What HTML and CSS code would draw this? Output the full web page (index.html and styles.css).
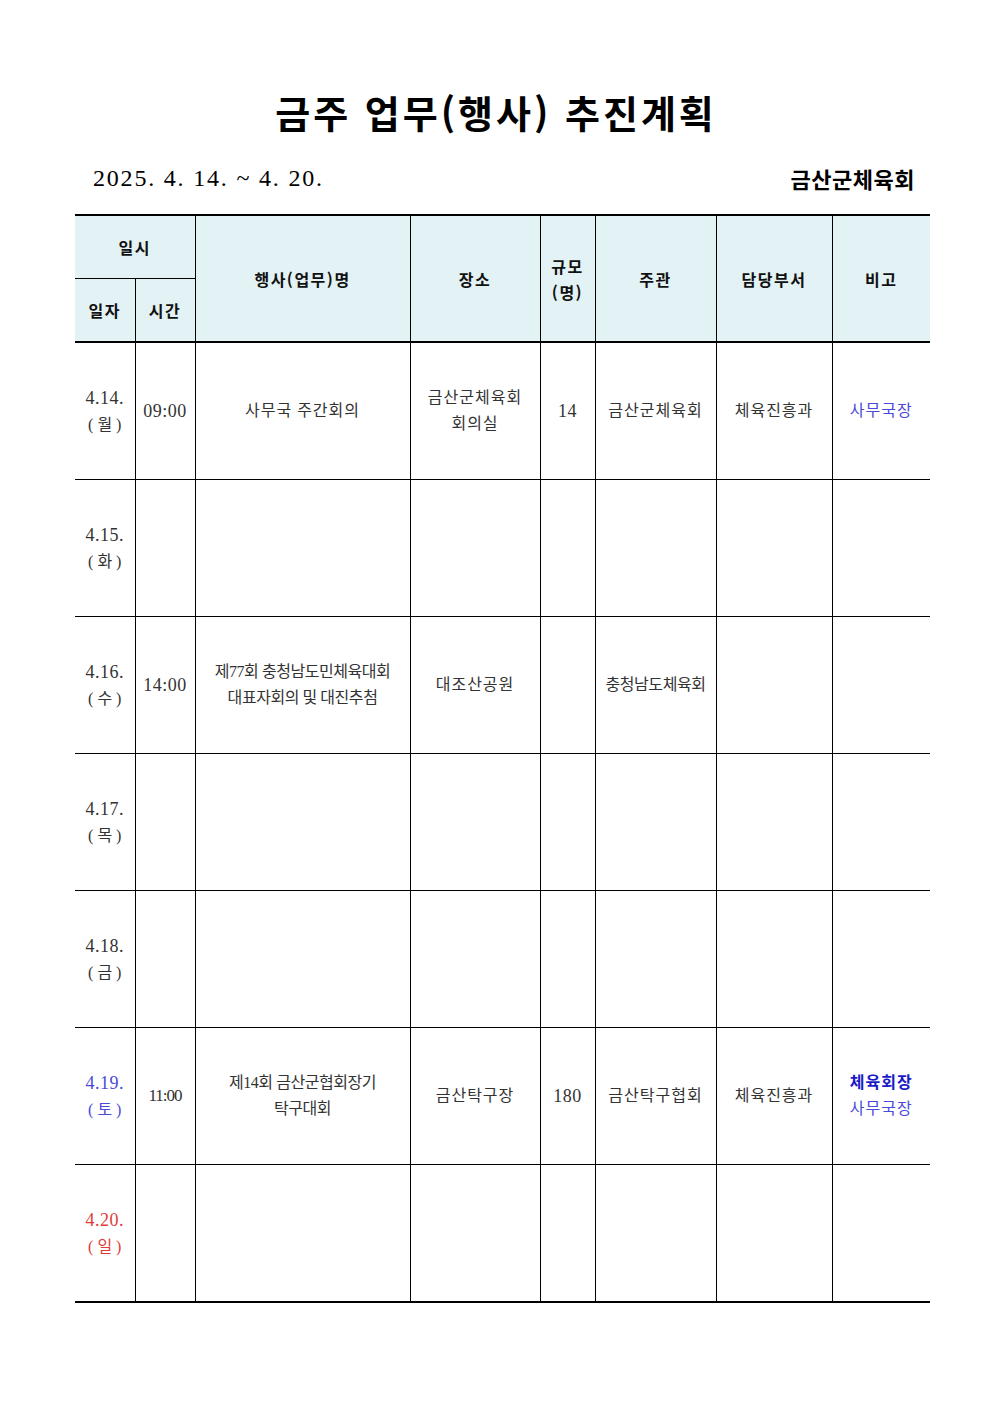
FILE: index.html
```html
<!DOCTYPE html>
<html lang="ko">
<head>
<meta charset="utf-8">
<link rel="stylesheet" href="styles.css">
</head>
<body>
<div class="page">
  <h1 class="title">금주 업무(행사) 추진계획</h1>
  <div class="subline">
    <span class="period">2025. 4. 14. ~ 4. 20.</span>
    <span class="org">금산군체육회</span>
  </div>
  <table class="plan">
    <colgroup>
      <col class="c1"><col class="c2"><col class="c3"><col class="c4"><col class="c5"><col class="c6"><col class="c7"><col class="c8">
    </colgroup>
    <thead>
      <tr class="h1">
        <th colspan="2">일시</th>
        <th rowspan="2">행사(업무)명</th>
        <th rowspan="2">장소</th>
        <th rowspan="2">규모<br>(명)</th>
        <th rowspan="2">주관</th>
        <th rowspan="2">담당부서</th>
        <th rowspan="2" class="last">비고</th>
      </tr>
      <tr class="h2">
        <th>일자</th>
        <th>시간</th>
      </tr>
    </thead>
    <tbody>
      <tr>
        <td class="date"><span class="num">4.14.</span><br>( 월 )</td>
        <td class="num">09:00</td>
        <td>사무국 주간회의</td>
        <td>금산군체육회<br>회의실</td>
        <td class="num">14</td>
        <td>금산군체육회</td>
        <td>체육진흥과</td>
        <td class="last blue">사무국장</td>
      </tr>
      <tr>
        <td class="date"><span class="num">4.15.</span><br>( 화 )</td>
        <td></td><td></td><td></td><td></td><td></td><td></td><td class="last"></td>
      </tr>
      <tr>
        <td class="date"><span class="num">4.16.</span><br>( 수 )</td>
        <td class="num">14:00</td>
        <td class="tight">제77회 충청남도민체육대회<br>대표자회의 및 대진추첨</td>
        <td>대조산공원</td>
        <td></td>
        <td class="tight">충청남도체육회</td>
        <td></td>
        <td class="last"></td>
      </tr>
      <tr>
        <td class="date"><span class="num">4.17.</span><br>( 목 )</td>
        <td></td><td></td><td></td><td></td><td></td><td></td><td class="last"></td>
      </tr>
      <tr>
        <td class="date"><span class="num">4.18.</span><br>( 금 )</td>
        <td></td><td></td><td></td><td></td><td></td><td></td><td class="last"></td>
      </tr>
      <tr>
        <td class="date blue"><span class="num">4.19.</span><br>( 토 )</td>
        <td class="num narrow">11:00</td>
        <td class="tight">제14회 금산군협회장기<br>탁구대회</td>
        <td>금산탁구장</td>
        <td class="num">180</td>
        <td>금산탁구협회</td>
        <td>체육진흥과</td>
        <td class="last blue"><b class="strong">체육회장</b><br>사무국장</td>
      </tr>
      <tr>
        <td class="date red"><span class="num">4.20.</span><br>( 일 )</td>
        <td></td><td></td><td></td><td></td><td></td><td></td><td class="last"></td>
      </tr>
    </tbody>
  </table>
</div>
</body>
</html>
```

FILE: styles.css
```css
html, body {
  margin: 0;
  padding: 0;
  background: #ffffff;
}
.page {
  width: 992px;
  padding-top: 88px;
  font-family: "Liberation Serif", "Noto Sans CJK KR", serif;
  color: #333333;
}
.title {
  margin: 0;
  text-align: center;
  font-family: "Noto Sans CJK KR", sans-serif;
  font-size: 38px;
  font-weight: 700;
  line-height: 48px;
  letter-spacing: 3px;
  color: #000000;
}
.subline {
  display: flex;
  justify-content: space-between;
  align-items: center;
  margin: 26px 77px 0 93px;
  height: 32px;
}
.period {
  font-family: "Liberation Serif", serif;
  font-size: 24px;
  letter-spacing: 1.8px;
  color: #000000;
}
.org {
  font-family: "Noto Sans CJK KR", sans-serif;
  font-size: 22px;
  letter-spacing: 0.5px;
  font-weight: 700;
  color: #000000;
}
.plan {
  margin: 20px 0 0 75px;
  width: 855px;
  border-collapse: collapse;
  table-layout: fixed;
  font-size: 16px;
}
.c1 { width: 60px; }
.c2 { width: 60px; }
.c3 { width: 215px; }
.c4 { width: 130px; }
.c5 { width: 55px; }
.c6 { width: 121px; }
.c7 { width: 116px; }
.c8 { width: 98px; }
.plan th,
.plan td {
  padding: 0;
  text-align: center;
  vertical-align: middle;
  border: 1px solid #000000;
  line-height: 26px;
  letter-spacing: 1px;
}
.plan th:first-child,
.plan td:first-child {
  border-left: none;
}
.plan .last {
  border-right: none;
}
.plan thead tr.h1 th {
  border-top: 2px solid #000000;
  height: 62px;
}
.plan thead tr.h2 th {
  height: 62px;
}
.plan thead th {
  background: #e3f2f4;
  color: #111111;
  font-family: "Noto Sans CJK KR", sans-serif;
  font-weight: 700;
  font-size: 16px;
  letter-spacing: 1.5px;
  border-bottom: 2px solid #000000;
}
.plan thead tr.h1 th[colspan] {
  border-bottom: 1px solid #000000;
}
.plan tbody td {
  height: 136px;
}
.plan tbody tr:last-child td {
  border-bottom: 2px solid #000000;
}
.plan .num {
  font-size: 18px;
  letter-spacing: 0.5px;
}
.plan td.date {
  letter-spacing: 0;
}
.plan td.narrow {
  font-size: 17px;
  letter-spacing: -1px;
}
.plan td.tight {
  letter-spacing: -0.45px;
  font-size: 16px;
}
.blue { color: #4a4ad8; }
.red { color: #e03a3a; }
.strong {
  color: #1a1ac8;
  font-weight: 700;
}
```
